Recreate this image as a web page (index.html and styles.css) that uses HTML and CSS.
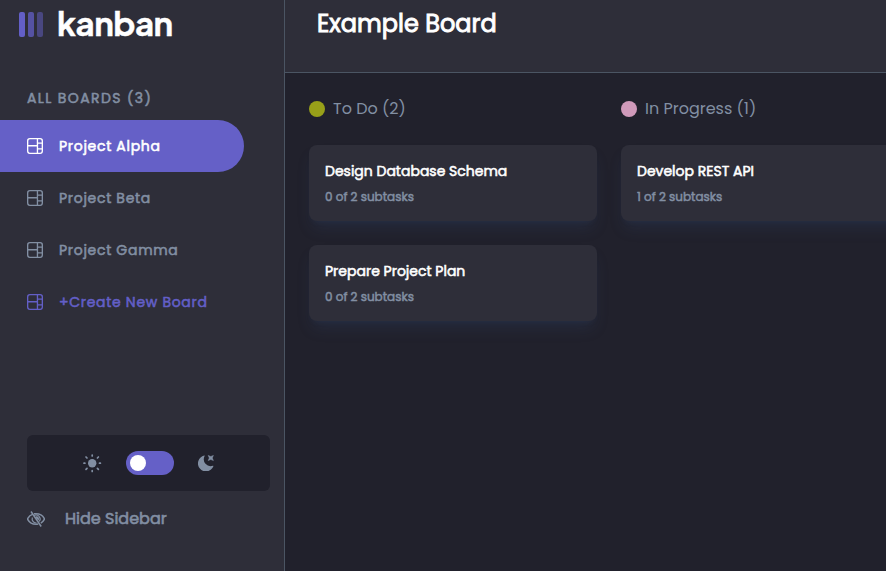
FILE: index.html
```html
<!DOCTYPE html>
<html lang="en">
<head>
<meta charset="utf-8">
<title>Kanban</title>
<link rel="stylesheet" href="styles.css">
</head>
<body>
<svg width="0" height="0" class="sprite">
  <symbol id="board" viewBox="0 0 16 16"><path fill="currentColor" d="M0 2.889A2.889 2.889 0 0 1 2.889 0H13.11A2.889 2.889 0 0 1 16 2.889V13.11A2.888 2.888 0 0 1 13.111 16H2.89A2.889 2.889 0 0 1 0 13.111V2.89Zm1.333 5.555v4.667c0 .859.697 1.556 1.556 1.556h6.889V8.444H1.333Zm8.445-1.333V1.333h-6.89A1.556 1.556 0 0 0 1.334 2.89V7.11h8.445Zm4.889-1.333H11.11v4.444h3.556V5.778Zm0 5.778H11.11v3.11h2a1.556 1.556 0 0 0 1.556-1.555v-1.555Zm0-7.112V2.89a1.555 1.555 0 0 0-1.556-1.556h-2v3.111h3.556Z"/></symbol>
</svg>
<div class="app">
  <aside class="sidebar">
    <div class="logo">
      <svg width="24" height="25" viewBox="0 0 24 25" fill="#635fc7"><rect width="6" height="25" rx="2"/><rect x="9" width="6" height="25" rx="2" opacity=".75"/><rect x="18" width="6" height="25" rx="2" opacity=".5"/></svg>
      <span class="wordmark">kanban</span>
    </div>
    <h2 class="nav-title">ALL BOARDS (3)</h2>
    <nav>
      <a class="item active"><svg class="icon"><use href="#board"/></svg><span>Project Alpha</span></a>
      <a class="item"><svg class="icon"><use href="#board"/></svg><span>Project Beta</span></a>
      <a class="item"><svg class="icon"><use href="#board"/></svg><span>Project Gamma</span></a>
      <a class="item create"><svg class="icon"><use href="#board"/></svg><span>+Create New Board</span></a>
    </nav>
    <div class="theme">
      <svg class="sun" width="19" height="19" viewBox="0 0 19 19"><circle cx="9.2" cy="9.2" r="4.2" fill="currentColor"/><path stroke="currentColor" stroke-width="1.7" stroke-linecap="round" d="M9.2 1v.9M9.2 16.500v.9M1 9.200h.9M16.500 9.200h.9M3 3l1 1M14.400 14.400l1 1M3 15.400l1-1M14.400 4l1-1"/></svg>
      <div class="toggle"><i class="knob"></i></div>
      <svg class="moon" width="16" height="16" viewBox="0 0 16 16" fill="currentColor"><path d="M6.2.6c.3-.1.6.2.4.5A6.900 6.900 0 0 0 14.900 10.800c.3-.1.6.2.5.5A8 8 0 1 1 6.200.6Z"/><path d="M10.200.4 12.800 1.500 15.400.4 14.300 3 15.400 5.600 12.800 4.500 10.200 5.600 11.300 3Z" stroke="currentColor" stroke-width=".5"/></svg>
    </div>
    <a class="hide">
      <svg width="18" height="16" viewBox="0 0 18 16" fill="none" stroke="currentColor" stroke-width="1.500"><path d="M6 3.100C3.600 3.900 1.700 5.600.8 7.300q-.3.700 0 1.400C2.200 11.300 5.200 13.300 9 13.300q1.200 0 2.200-.2M7 2.850Q8 2.700 9 2.700c3.800 0 6.800 2 8.200 4.600q.3.700 0 1.400c-.7 1.300-1.900 2.500-3.400 3.400"/><path d="M5.400 6.500A4.100 4.100 0 0 0 9.600 12M7 4.500A4.100 4.100 0 0 1 12.300 10.500" stroke-width="1.200"/><path d="M4 .5 14.200 15.500"/><path fill="currentColor" stroke="none" d="M9 5.200a2.800 2.800 0 0 1 2.600 4.300L8.200 6.500Z"/></svg>
      <span>Hide Sidebar</span>
    </a>
  </aside>
  <div class="main">
    <header><h1>Example Board</h1></header>
    <main class="columns">
      <section class="column">
        <h3><i class="dot todo"></i><span>To Do (2)</span></h3>
        <article class="card"><h4>Design Database Schema</h4><p>0 of 2 subtasks</p></article>
        <article class="card"><h4>Prepare Project Plan</h4><p>0 of 2 subtasks</p></article>
      </section>
      <section class="column">
        <h3><i class="dot progress"></i><span>In Progress (1)</span></h3>
        <article class="card"><h4>Develop REST API</h4><p>1 of 2 subtasks</p></article>
      </section>
    </main>
  </div>
</div>
</body>
</html>
```
FILE: styles.css
```css
* { box-sizing: border-box; margin: 0; padding: 0; }
body { height: 571px; overflow: hidden; background: #21212c; font-family: Poppins, Inter, sans-serif; color: #828fa3; white-space: nowrap; }
.sprite { display: none; }
.app { display: flex; height: 571px; }
.sidebar { width: 285px; flex: none; background: #2e2e39; border-right: 1px solid #4b5563; display: flex; flex-direction: column; }
.logo { display: flex; align-items: center; height: 49px; padding-left: 19px; gap: 14px; }
.wordmark { font-family: "Plus Jakarta Sans", Inter, sans-serif; font-size: 33px; font-weight: 700; line-height: 40px; margin-top: -3px; color: #fff; letter-spacing: -0.5px; -webkit-text-stroke: 0.4px currentColor; }
.nav-title { margin-top: 37px; padding-left: 27px; height: 24px; font-size: 14px; line-height: 24px; font-weight: 400; letter-spacing: 1.4px; -webkit-text-stroke: 0.55px currentColor; }
.nav-title + nav { margin-top: 10px; }
.item { display: flex; align-items: center; gap: 16px; width: 244px; height: 52px; padding-left: 27px; border-radius: 0 26px 26px 0; font-size: 14px; letter-spacing: 0.7px; -webkit-text-stroke: 0.55px currentColor; }
.icon { width: 16px; height: 16px; }
.active { background: #6560c7; color: #fff; }
.create { color: #635fc7; }
.theme { margin: 107px 14px 0 27px; height: 56px; border-radius: 6px; background: #21212c; display: flex; align-items: center; justify-content: center; gap: 24px; }
.toggle { width: 48px; height: 24px; border-radius: 12px; background: #6560c7; padding: 4px; }
.knob { display: block; width: 16px; height: 16px; border-radius: 50%; background: #fff; }
.hide { display: flex; align-items: center; gap: 20px; height: 24px; margin: 16px 0 0 27px; font-size: 16px; }
.hide span { position: relative; top: -1px; -webkit-text-stroke: 0.6px currentColor; }
.main { flex: 1; min-width: 0; overflow: hidden; }
header { height: 73px; background: #2e2e39; border-bottom: 1px solid #4b5563; padding: 6px 0 0 32px; }
h1 { font-size: 24px; line-height: 36px; font-weight: 400; color: #fff; -webkit-text-stroke: 0.9px currentColor; }
.columns { display: flex; gap: 24px; padding: 24px; }
.column { width: 288px; flex: none; }
h3 { display: flex; align-items: center; gap: 8px; height: 24px; margin-bottom: 24px; font-size: 16px; font-weight: 400; }
h3 span { position: relative; top: -1px; }
.dot { width: 16px; height: 16px; border-radius: 50%; }
.todo { background: #98a019; }
.progress { background: #d09aba; }
.card { height: 76px; margin-bottom: 24px; padding: 15px 16px; border-radius: 8px; background: #2e2e39; box-shadow: 0 10px 15px -3px rgba(54, 78, 126, .2), 0 4px 6px -4px rgba(54, 78, 126, .2); }
h4 { font-size: 14px; line-height: 22px; font-weight: 400; color: #fff; -webkit-text-stroke: 0.55px currentColor; }
.card p { margin-top: 6px; font-size: 12px; line-height: 18px; -webkit-text-stroke: 0.5px currentColor; }
```
